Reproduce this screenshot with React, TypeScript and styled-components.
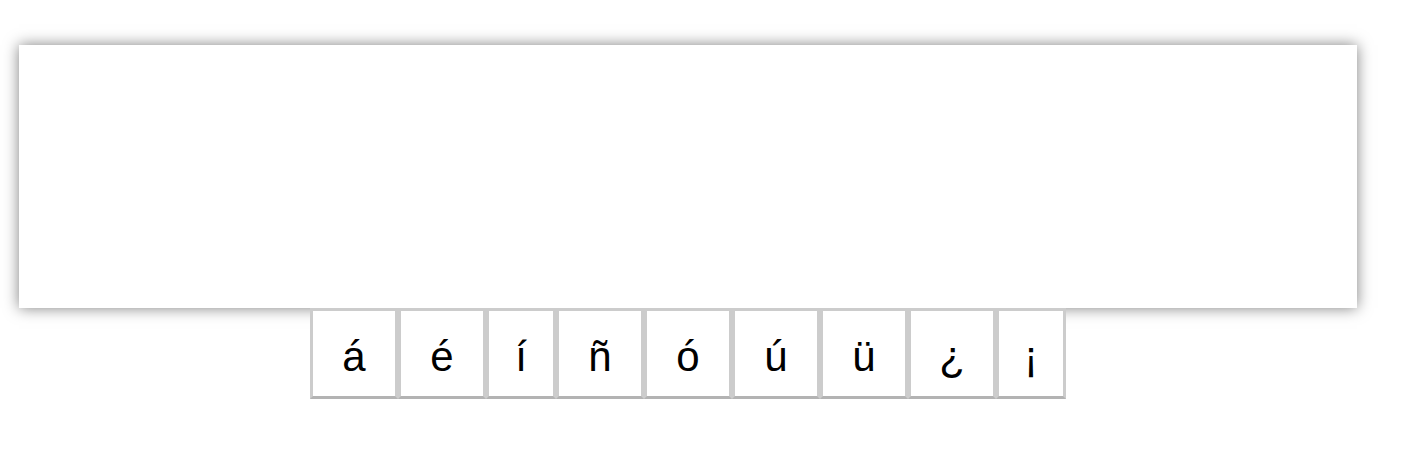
import React from 'react';
import styled, { createGlobalStyle } from 'styled-components';

const GlobalStyle = createGlobalStyle`
  html, body {
    margin: 0;
    padding: 0;
    background: #ffffff;
    font-family: 'Liberation Sans', Arial, sans-serif;
  }
`;

const Page = styled.div`
  padding: 45px 0 0 19px;
  width: 1338px;
`;

const Editor = styled.div`
  width: 1338px;
  height: 263px;
  background: #ffffff;
  box-shadow: 0 0 14px rgba(0, 0, 0, 0.5);
`;

const Keys = styled.div`
  display: flex;
  justify-content: center;
`;

const Key = styled.button<{ $narrow?: boolean }>`
  box-sizing: border-box;
  width: ${p => (p.$narrow ? '70px' : '88px')};
  height: 91px;
  padding: 6px 0 0;
  margin: 0;
  display: flex;
  align-items: center;
  justify-content: center;
  background: #ffffff;
  border: 3px solid #cccccc;
  border-bottom-color: #b3b3b3;
  border-radius: 0;
  font-family: 'Liberation Sans', Arial, sans-serif;
  font-size: 42px;
  color: #000000;
  cursor: pointer;
`;

const chars = ['á', 'é', 'í', 'ñ', 'ó', 'ú', 'ü', '¿', '¡'];
const narrow = ['í', '¡'];

export default function App() {
  return (
    <Page>
      <GlobalStyle />
      <Editor />
      <Keys>
        {chars.map(c => (
          <Key key={c} $narrow={narrow.includes(c)}>
            {c}
          </Key>
        ))}
      </Keys>
    </Page>
  );
}
